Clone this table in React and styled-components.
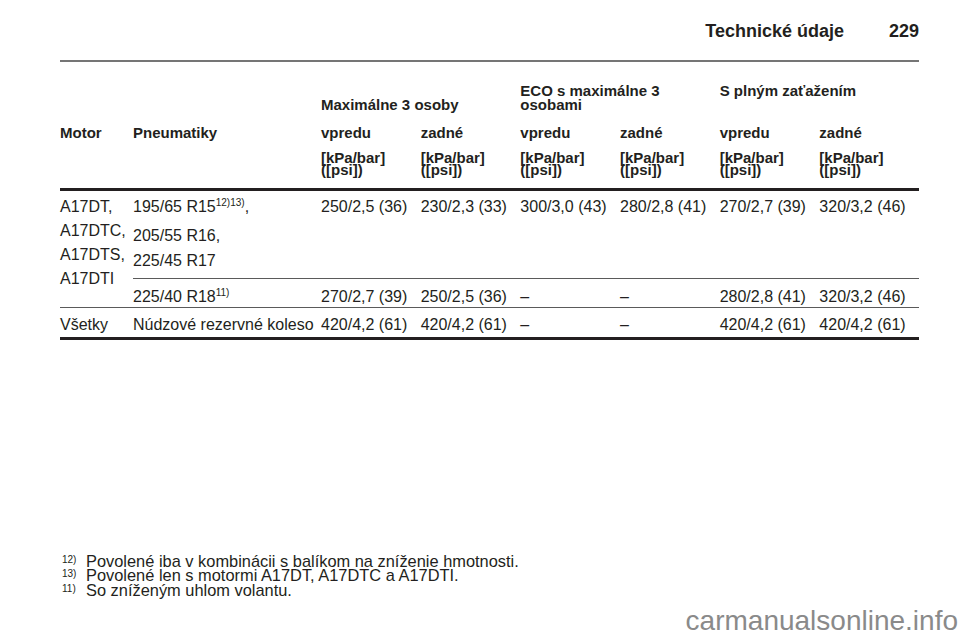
import React from 'react';
import styled, { createGlobalStyle, css } from 'styled-components';

const GlobalStyle = createGlobalStyle`
  html, body {
    margin: 0;
    padding: 0;
    background: #ffffff;
  }
  body {
    font-family: 'Liberation Sans', Arial, sans-serif;
    color: #231f20;
  }
`;

const columns = css`
  display: grid;
  grid-template-columns: 73px 188px repeat(6, 1fr);
`;

const groups = [
  { label: ['Maximálne 3 osoby'], align: 'end' },
  { label: ['ECO s maximálne 3', 'osobami'], align: 'start' },
  { label: ['S plným zaťažením'], align: 'start' },
];

const rows = [
  {
    values: ['250/2,5 (36)', '230/2,3 (33)', '300/3,0 (43)', '280/2,8 (41)', '270/2,7 (39)', '320/3,2 (46)'],
  },
  {
    values: ['270/2,7 (39)', '250/2,5 (36)', '–', '–', '280/2,8 (41)', '320/3,2 (46)'],
  },
  {
    values: ['420/4,2 (61)', '420/4,2 (61)', '–', '–', '420/4,2 (61)', '420/4,2 (61)'],
  },
];

const footnotes = [
  { mark: '12)', text: 'Povolené iba v kombinácii s balíkom na zníženie hmotnosti.' },
  { mark: '13)', text: 'Povolené len s motormi A17DT, A17DTC a A17DTI.' },
  { mark: '11)', text: 'So zníženým uhlom volantu.' },
];

function App() {
  return (
    <>
      <GlobalStyle />
      <Page>
        <PageHeader>
          <Title>Technické údaje</Title>
          <Title>229</Title>
        </PageHeader>
        <TopRule />

        <GroupRow>
          <span />
          <span />
          {groups.map((g) => (
            <GroupCell key={g.label[0]} $align={g.align}>
              {g.label.map((l, i) => (
                <React.Fragment key={l}>
                  {i > 0 && <br />}
                  {l}
                </React.Fragment>
              ))}
            </GroupCell>
          ))}
        </GroupRow>

        <LabelRow>
          <HeadCell>Motor</HeadCell>
          <HeadCell>Pneumatiky</HeadCell>
          {[0, 1, 2].map((i) => (
            <React.Fragment key={i}>
              <HeadCell>vpredu</HeadCell>
              <HeadCell>zadné</HeadCell>
            </React.Fragment>
          ))}
        </LabelRow>

        <UnitRow>
          <span />
          <span />
          {[0, 1, 2, 3, 4, 5].map((i) => (
            <UnitCell key={i}>
              [kPa/bar]
              <br />
              ([psi])
            </UnitCell>
          ))}
        </UnitRow>

        <ThickRule />

        <Body>
          <MotorCell>
            A17DT,
            <br />
            A17DTC,
            <br />
            A17DTS,
            <br />
            A17DTI
          </MotorCell>
          <BodyCell $row={1} $ruled $pad={3}>
            <TireLine $extra={4}>
              195/65 R15<Sup>12)13)</Sup>,
            </TireLine>
            <TireLine>205/55 R16,</TireLine>
            <TireLine>225/45 R17</TireLine>
          </BodyCell>
          {rows[0].values.map((v, i) => (
            <BodyCell key={'a' + i} $row={1} $ruled $pad={3.5}>
              {v}
            </BodyCell>
          ))}

          <BodyCell $row={2} $ruled $pad={6}>
            225/40 R18<Sup>11)</Sup>
          </BodyCell>
          {rows[1].values.map((v, i) => (
            <BodyCell key={'b' + i} $row={2} $ruled $pad={6}>
              {v}
            </BodyCell>
          ))}

          <BodyCell $row={3} $pad={4.5}>
            Všetky
          </BodyCell>
          <BodyCell $row={3} $pad={4.5}>
            Núdzové rezervné koleso
          </BodyCell>
          {rows[2].values.map((v, i) => (
            <BodyCell key={'c' + i} $row={3} $pad={4.5}>
              {v}
            </BodyCell>
          ))}
        </Body>

        <ThickRule />

        <Footnotes>
          {footnotes.map((f, i) => (
            <React.Fragment key={f.mark}>
              {i > 0 && <br />}
              <FootMark>{f.mark}</FootMark>
              {f.text}
            </React.Fragment>
          ))}
        </Footnotes>

        <Watermark>carmanualsonline.info</Watermark>
      </Page>
    </>
  );
}

export default App;

const Page = styled.div`
  box-sizing: border-box;
  width: 960px;
  min-height: 642px;
  padding: 21px 41px 7px 60px;
  display: flex;
  flex-direction: column;
`;

const PageHeader = styled.div`
  display: flex;
  justify-content: flex-end;
  align-items: baseline;
  gap: 45px;
  height: 20px;
`;

const Title = styled.div`
  font-size: 18px;
  line-height: 20px;
  font-weight: 700;
`;

const TopRule = styled.div`
  margin-top: 19px;
  height: 2px;
  background-color: #757575;
`;

const GroupRow = styled.div`
  ${columns}
  padding-top: 21.5px;
  height: 28px;
  font-size: 15px;
  line-height: 14px;
  font-weight: 700;
`;

const GroupCell = styled.div`
  grid-column: span 2;
  align-self: ${({ $align }) => $align};
  white-space: nowrap;
`;

const LabelRow = styled.div`
  ${columns}
  margin-top: 14px;
  font-size: 15px;
  line-height: 14px;
  font-weight: 700;
`;

const HeadCell = styled.div`
  white-space: nowrap;
`;

const UnitRow = styled.div`
  ${columns}
  margin-top: 12.5px;
  font-size: 15px;
  line-height: 12px;
  font-weight: 700;
`;

const UnitCell = styled.div`
  white-space: nowrap;
`;

const ThickRule = styled.div`
  margin-top: 12px;
  height: 3px;
  background-color: #231f20;
`;

const Body = styled.div`
  ${columns}
  grid-template-rows: 88px 29px 29px;
  font-size: 16px;
  line-height: 24px;

  & + ${ThickRule} {
    margin-top: 0;
  }
`;

const MotorCell = styled.div`
  grid-row: 1 / span 2;
  box-sizing: border-box;
  padding-top: 3.5px;
  white-space: nowrap;
  border-bottom: 1px solid #5a5a5a;
`;

const BodyCell = styled.div`
  grid-row: ${({ $row }) => $row};
  box-sizing: border-box;
  padding-top: ${({ $pad }) => $pad}px;
  white-space: nowrap;
  border-bottom: ${({ $ruled }) => ($ruled ? '1px solid #5a5a5a' : 'none')};
`;

const TireLine = styled.div`
  line-height: 25px;
  margin-bottom: ${({ $extra }) => $extra || 0}px;
  white-space: nowrap;
`;

const Sup = styled.sup`
  font-size: 10px;
  line-height: 0;
  vertical-align: 6px;
`;

const Footnotes = styled.div`
  margin-top: auto;
  margin-bottom: 10px;
  font-size: 16.4px;
  line-height: 14.5px;
  white-space: nowrap;
`;

const FootMark = styled.span`
  display: inline-block;
  width: 24px;
  margin-left: 2px;
  font-size: 10px;
  line-height: 10px;
  vertical-align: top;
  margin-top: 1px;
`;

const Watermark = styled.div`
  align-self: flex-end;
  margin-right: -39px;
  font-size: 28px;
  line-height: 28px;
  color: #8a8a8a;
`;
